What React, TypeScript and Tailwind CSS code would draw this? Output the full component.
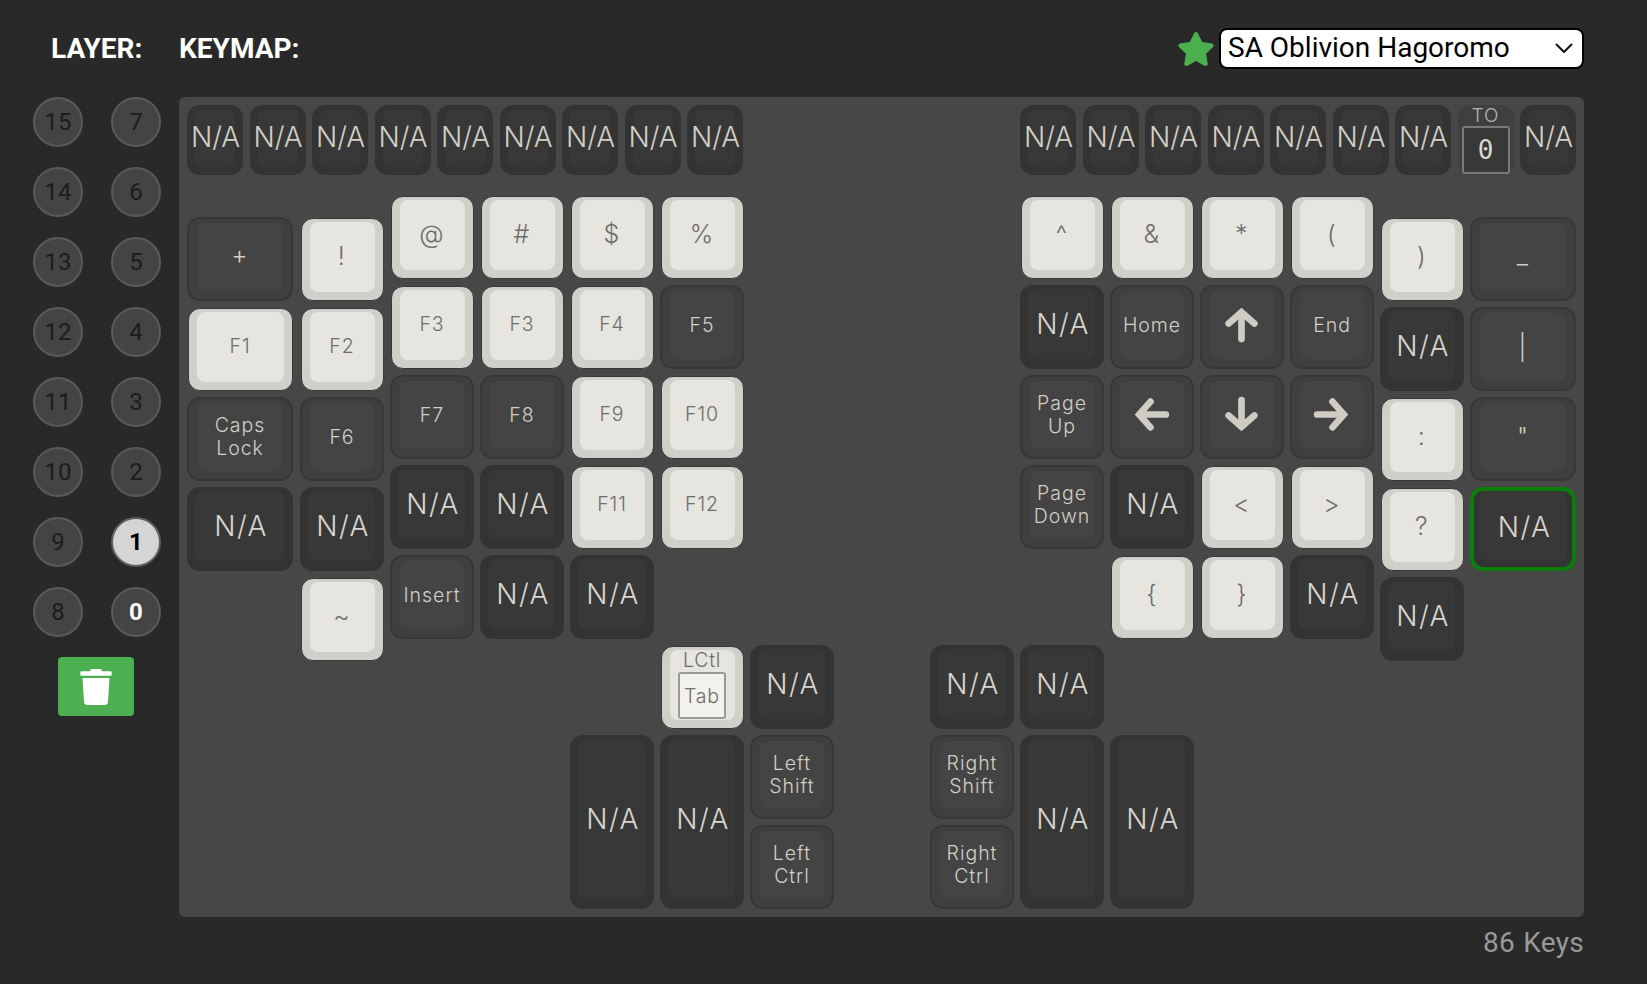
import React from 'react';
import { FaStar, FaTrash } from 'react-icons/fa';

type Tone = 'dark' | 'mid' | 'light' | 'selected';
type Dir = 'up' | 'down' | 'left' | 'right';

interface KeyDef {
  label?: string;
  tone: Tone;
  size?: string;
  text?: string;
  arrow?: Dir;
}

const UNIT = 'w-[84px] h-[84px]';
const WIDE = 'w-[106px] h-[84px]';
const TALL = 'w-[84px] h-[174px]';
const SMALL = 'text-[19.5px]';

const na = (size = UNIT): KeyDef => ({ label: 'N/A', tone: 'dark', size, text: 'text-[28px]' });
const light = (label: string, text = 'text-[25px]', size = UNIT): KeyDef => ({ label, tone: 'light', size, text });
const mid = (label: string, text = SMALL, size = UNIT): KeyDef => ({ label, tone: 'mid', size, text });
const arrow = (dir: Dir): KeyDef => ({ tone: 'mid', size: UNIT, arrow: dir });

const SHELL: Record<Tone, string> = {
  dark: 'h-full bg-[#333333] rounded-[13px] pt-1 pl-2 pr-[9px] pb-[10px]',
  mid: 'h-full bg-[#3f3f3f] border-2 border-[#373737] rounded-[13px] pt-1 px-2 pb-2',
  light: 'm-[0.5px] h-[calc(100%-1px)] bg-[#d0cfc9] border border-[#383838] rounded-[12px] pt-[3px] px-2 pb-2',
  selected: 'h-full bg-[#333333] border-4 border-[#0a7d0a] rounded-[13px] pt-px px-[5px] pb-[5px]',
};

const CAP: Record<Tone, string> = {
  dark: 'bg-[#383838] text-[#d8d6cf] pl-[3px]',
  mid: 'bg-[#444444] text-[#d2cfc6]',
  light: 'bg-[#e6e5df] text-[#6d6d6a]',
  selected: 'bg-[#383838] text-[#d8d6cf] pl-[3px]',
};

const Arrow = ({ dir }: { dir: Dir }) => {
  const turn = { up: '', down: 'rotate-180', left: '-rotate-90', right: 'rotate-90' }[dir];
  return (
    <svg viewBox="0 0 36 36" className={`w-[37px] h-[37px] -ml-0.5 -mt-0.5 ${turn}`} fill="none" stroke="#cfccc4" strokeWidth="6.5" strokeLinecap="round" strokeLinejoin="miter">
      <path d="M18 32V7" />
      <path d="M5.5 17 18 6l12.5 11" />
    </svg>
  );
};

const Key = ({ def }: { def: KeyDef }) => {
  const { tone, label, size = UNIT, text = SMALL } = def;
  const lines = label ? label.split('\n') : [];
  return (
    <div className={`${size} shrink-0`}>
      <div className={`${SHELL[tone]} box-border`}>
        <div className={`${CAP[tone]} ${text} h-full rounded-[8px] flex flex-col items-center justify-center font-['Inter',sans-serif] font-light tracking-[0.05em] leading-[23px]`}>
          {def.arrow ? <Arrow dir={def.arrow} /> : lines.map((l) => <span key={l}>{l}</span>)}
        </div>
      </div>
    </div>
  );
};

const TO_KEY = (
  <div className="w-14 h-[70px] shrink-0 rounded-[13px] bg-[#3f3f3f] flex flex-col items-center">
    <span className="h-[21px] text-[19px] leading-[21px] tracking-[0.05em] text-[#b9b7b0] font-['Inter',sans-serif] font-light">TO</span>
    <div className="w-12 h-12 rounded-[3px] border-2 border-[#7a7a7a] bg-[#383838] flex items-center justify-center text-[26px] text-[#dcd9d0] font-['DejaVu_Sans_Mono',monospace]">
      0
    </div>
  </div>
);

const LCTL_KEY = (
  <div className="w-[84px] h-[84px] shrink-0">
    <div className="m-[0.5px] h-[83px] box-border rounded-[12px] border border-[#383838] bg-[#d0cfc9] pt-[3px] px-2 pb-2">
      <div className="h-full rounded-[8px] bg-[#e6e5df] flex flex-col items-center font-['Inter',sans-serif] font-light tracking-[0.05em] text-[#6d6d6a]">
        <span className="h-[22px] text-[19.5px] leading-[20px]">LCtl</span>
        <div className="w-12 h-[47px] shrink-0 rounded-[3px] border-2 border-[#9a9a96] bg-[#f2f1ec] pt-[3px] flex items-center justify-center text-[19.5px]">Tab</div>
      </div>
    </div>
  </div>
);

const LEFT_COLS: { top: string; keys: (KeyDef | null | 'lctl')[] }[] = [
  { top: 'pt-[22px]', keys: [mid('+', 'text-[25px] pb-1', WIDE), light('F1', SMALL, WIDE), mid('Caps\nLock', SMALL, WIDE), na(WIDE)] },
  { top: 'pt-[22px] ml-px', keys: [light('!'), light('F2', SMALL), mid('F6'), na(), light('~')] },
  { top: '', keys: [light('@'), light('F3', SMALL), mid('F7'), na(), mid('Insert')] },
  { top: '', keys: [light('#'), light('F3', SMALL), mid('F8'), na(), na()] },
  { top: '', keys: [light('$'), light('F4', SMALL), light('F9', SMALL), light('F11', SMALL), na(), null, na(TALL)] },
  { top: '', keys: [light('%'), mid('F5'), light('F10', SMALL), light('F12', SMALL), null, 'lctl', na(TALL)] },
  { top: 'pt-[450px]', keys: [na(), mid('Left\nShift'), mid('Left\nCtrl')] },
];

const RIGHT_COLS: { top: string; keys: (KeyDef | null)[] }[] = [
  { top: 'pt-[450px]', keys: [na(), mid('Right\nShift'), mid('Right\nCtrl')] },
  { top: '', keys: [light('^'), na(), mid('Page\nUp'), mid('Page\nDown'), null, na(), na(TALL)] },
  { top: '', keys: [light('&'), mid('Home'), arrow('left'), na(), light('{'), null, na(TALL)] },
  { top: '', keys: [light('*'), arrow('up'), arrow('down'), light('<'), light('}')] },
  { top: '', keys: [light('('), mid('End'), arrow('right'), light('>'), na()] },
  { top: 'pt-[22px]', keys: [light(')'), na(), light(':'), light('?'), na()] },
  {
    top: 'pt-[22px]',
    keys: [
      mid('_', 'text-[25px] pb-1', WIDE),
      mid('|', 'text-[25px]', WIDE),
      mid('"', 'text-[25px]', WIDE),
      { label: 'N/A', tone: 'selected', size: WIDE, text: 'text-[28px]' },
    ],
  },
];

const TopKey = () => (
  <div className="w-14 h-[70px] shrink-0 rounded-[13px] bg-[#333333] pt-[5px] px-2 pb-2">
    <div className="h-full rounded-[6px] bg-[#383838] flex items-center justify-center pb-1 text-[28px] text-[#d2cfc6] font-['Inter',sans-serif] font-light">
      <span className="-mx-3 pl-px">N/A</span>
    </div>
  </div>
);

const LAYERS: [number, number][] = [
  [15, 7],
  [14, 6],
  [13, 5],
  [12, 4],
  [11, 3],
  [10, 2],
  [9, 1],
  [8, 0],
];

const LayerDot = ({ n }: { n: number }) => {
  const look =
    n === 1
      ? 'bg-[#d5d5d5] text-black font-bold border-[#5f5f5f]'
      : n === 0
        ? 'bg-[#444444] text-white font-bold border-[#5a5a5a]'
        : 'bg-[#444444] text-[#1c1c1c] border-[#5a5a5a]';
  return <div className={`w-[50px] h-[50px] rounded-full border-2 flex items-center justify-center text-[24px] ${look}`}>{n}</div>;
};

export default function App() {
  return (
    <div className="min-h-screen bg-[#292929] font-['Roboto',sans-serif]">
      <div className="h-[97px] flex items-center pr-[63px]">
        <div className="w-[179px] pl-[51px] text-[28px] font-bold text-white">LAYER:</div>
        <div className="text-[28px] font-bold text-white">KEYMAP:</div>
        <div className="ml-auto flex items-center gap-[4px]">
          <FaStar className="w-[38px] h-[36px] text-[#4caf50]" />
          <button className="w-[365px] h-[41px] bg-white text-black border-2 border-black rounded-[8px] pl-[7px] pr-[9px] pb-[2px] flex items-center justify-between text-[28px] leading-none">
            <span>SA Oblivion Hagoromo</span>
            <svg viewBox="0 0 18 10" className="w-[18px] h-[10px]" fill="none" stroke="#111111" strokeWidth="2">
              <path d="M1 1l8 8 8-8" />
            </svg>
          </button>
        </div>
      </div>

      <div className="flex">
        <div className="w-[179px] shrink-0 pl-[33px]">
          <div className="grid grid-cols-[50px_50px] gap-x-[28px] gap-y-5 w-fit">
            {LAYERS.map(([a, b]) => (
              <React.Fragment key={a}>
                <LayerDot n={a} />
                <LayerDot n={b} />
              </React.Fragment>
            ))}
          </div>
          <button className="mt-5 ml-[25px] w-[76px] h-[59px] rounded-[4px] bg-[#4caf50] flex items-center justify-center">
            <FaTrash className="w-8 h-9 text-white" />
          </button>
        </div>

        <div className="w-[1405px] h-[820px] rounded-[6px] bg-[#474747] p-2 flex flex-col">
          <div className="h-[70px] flex justify-between">
            <div className="flex gap-[6.5px]">
              {Array.from({ length: 9 }).map((_, i) => (
                <TopKey key={i} />
              ))}
            </div>
            <div className="flex gap-[6.5px]">
              {Array.from({ length: 7 }).map((_, i) => (
                <TopKey key={i} />
              ))}
              {TO_KEY}
              <TopKey />
            </div>
          </div>

          <div className="mt-5 flex justify-between">
            <div className="flex gap-[6px]">
              {LEFT_COLS.map((col, i) => (
                <div key={i} className={`flex flex-col gap-[6px] ${col.top}`}>
                  {col.keys.map((k, j) =>
                    k === null ? <div key={j} className="h-[84px]" /> : k === 'lctl' ? <React.Fragment key={j}>{LCTL_KEY}</React.Fragment> : <Key key={j} def={k} />,
                  )}
                </div>
              ))}
            </div>
            <div className="flex gap-[6px]">
              {RIGHT_COLS.map((col, i) => (
                <div key={i} className={`flex flex-col gap-[6px] ${col.top}`}>
                  {col.keys.map((k, j) => (k === null ? <div key={j} className="h-[84px]" /> : <Key key={j} def={k} />))}
                </div>
              ))}
            </div>
          </div>
        </div>
      </div>

      <div className="pr-[63px] pt-[8px] text-right text-[28px] leading-[36px] text-[#999999] tracking-[0.01em] [word-spacing:1px]">86 Keys</div>
    </div>
  );
}
